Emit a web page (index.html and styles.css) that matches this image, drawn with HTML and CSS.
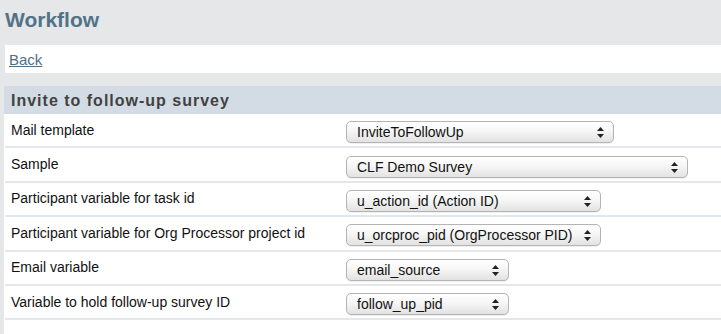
FILE: index.html
```html
<!DOCTYPE html>
<html>
<head>
<meta charset="utf-8">
<link rel="stylesheet" href="styles.css">
</head>
<body>
<h1 class="title">Workflow</h1>
<div class="backbar"><a href="#" class="back">Back</a></div>
<div class="panel">
  <h2 class="section">Invite to follow-up survey</h2>
  <div class="rows">
    <div class="row">
      <span class="label">Mail template</span>
      <span class="sel w1"><span class="val">InviteToFollowUp</span><svg class="arr" width="7" height="11" viewBox="0 0 7 11"><path d="M3.5 0 L7 4 L0 4 Z M0 7 L7 7 L3.5 11 Z" fill="#222"/></svg></span>
    </div>
    <div class="row">
      <span class="label">Sample</span>
      <span class="sel w2"><span class="val">CLF Demo Survey</span><svg class="arr" width="7" height="11" viewBox="0 0 7 11"><path d="M3.5 0 L7 4 L0 4 Z M0 7 L7 7 L3.5 11 Z" fill="#222"/></svg></span>
    </div>
    <div class="row">
      <span class="label">Participant variable for task id</span>
      <span class="sel w3"><span class="val">u_action_id (Action ID)</span><svg class="arr" width="7" height="11" viewBox="0 0 7 11"><path d="M3.5 0 L7 4 L0 4 Z M0 7 L7 7 L3.5 11 Z" fill="#222"/></svg></span>
    </div>
    <div class="row">
      <span class="label">Participant variable for Org Processor project id</span>
      <span class="sel w3"><span class="val">u_orcproc_pid (OrgProcessor PID)</span><svg class="arr" width="7" height="11" viewBox="0 0 7 11"><path d="M3.5 0 L7 4 L0 4 Z M0 7 L7 7 L3.5 11 Z" fill="#222"/></svg></span>
    </div>
    <div class="row">
      <span class="label">Email variable</span>
      <span class="sel w4"><span class="val">email_source</span><svg class="arr" width="7" height="11" viewBox="0 0 7 11"><path d="M3.5 0 L7 4 L0 4 Z M0 7 L7 7 L3.5 11 Z" fill="#222"/></svg></span>
    </div>
    <div class="row">
      <span class="label">Variable to hold follow-up survey ID</span>
      <span class="sel w4"><span class="val">follow_up_pid</span><svg class="arr" width="7" height="11" viewBox="0 0 7 11"><path d="M3.5 0 L7 4 L0 4 Z M0 7 L7 7 L3.5 11 Z" fill="#222"/></svg></span>
    </div>
  </div>
</div>
</body>
</html>
```
FILE: styles.css
```css
html, body {
  margin: 0;
  padding: 0;
  background: #e6e7e9;
  font-family: "Liberation Sans", Arial, Helvetica, sans-serif;
}
body {
  height: 334px;
  overflow: hidden;
}
.title {
  margin: 0;
  height: 45px;
  padding: 8px 0 0 5px;
  box-sizing: border-box;
  font-size: 21px;
  font-weight: bold;
  color: #527387;
  line-height: 24px;
}
.backbar {
  margin-left: 5px;
  background: #fff;
  height: 28px;
  box-sizing: border-box;
  padding: 6px 0 0 4px;
  font-size: 15px;
  line-height: 18px;
}
.back {
  color: #4f6f82;
  text-decoration: underline;
}
.panel {
  margin: 13px 0 0 4px;
  background: #fff;
  height: 248px;
}
.section {
  margin: 0;
  height: 28px;
  box-sizing: border-box;
  background: #d3dce5;
  padding: 6px 0 0 7px;
  font-size: 16px;
  line-height: 18px;
  letter-spacing: 1px;
  font-weight: bold;
  color: #424242;
}
.rows {
  display: flex;
  flex-direction: column;
  margin-left: 1px;
}
.row {
  display: grid;
  grid-template-columns: 341px 1fr;
  align-items: center;
  height: 34.4px;
  box-sizing: border-box;
  border-bottom: 2px solid #e3e8ee;
  padding-top: 4px;
}
.label {
  font-size: 14px;
  color: #111;
  padding-left: 6px;
  line-height: 16px;
  margin-top: -5px;
}
.sel {
  position: relative;
  display: flex;
  align-items: center;
  height: 22px;
  box-sizing: border-box;
  border: 1px solid #b4b4b4;
  border-radius: 5px;
  background: linear-gradient(#ffffff 0%, #f6f6f6 45%, #e2e2e2 100%);
  box-shadow: 0 1px 0 rgba(0,0,0,0.06);
  font-size: 14px;
  color: #111;
  padding-left: 10px;
}
.val {
  line-height: 16px;
}
.arr {
  position: absolute;
  right: 9px;
  top: 5px;
}
.w1 { width: 268px; }
.w2 { width: 342px; }
.w3 { width: 255px; }
.w4 { width: 163px; }
```
